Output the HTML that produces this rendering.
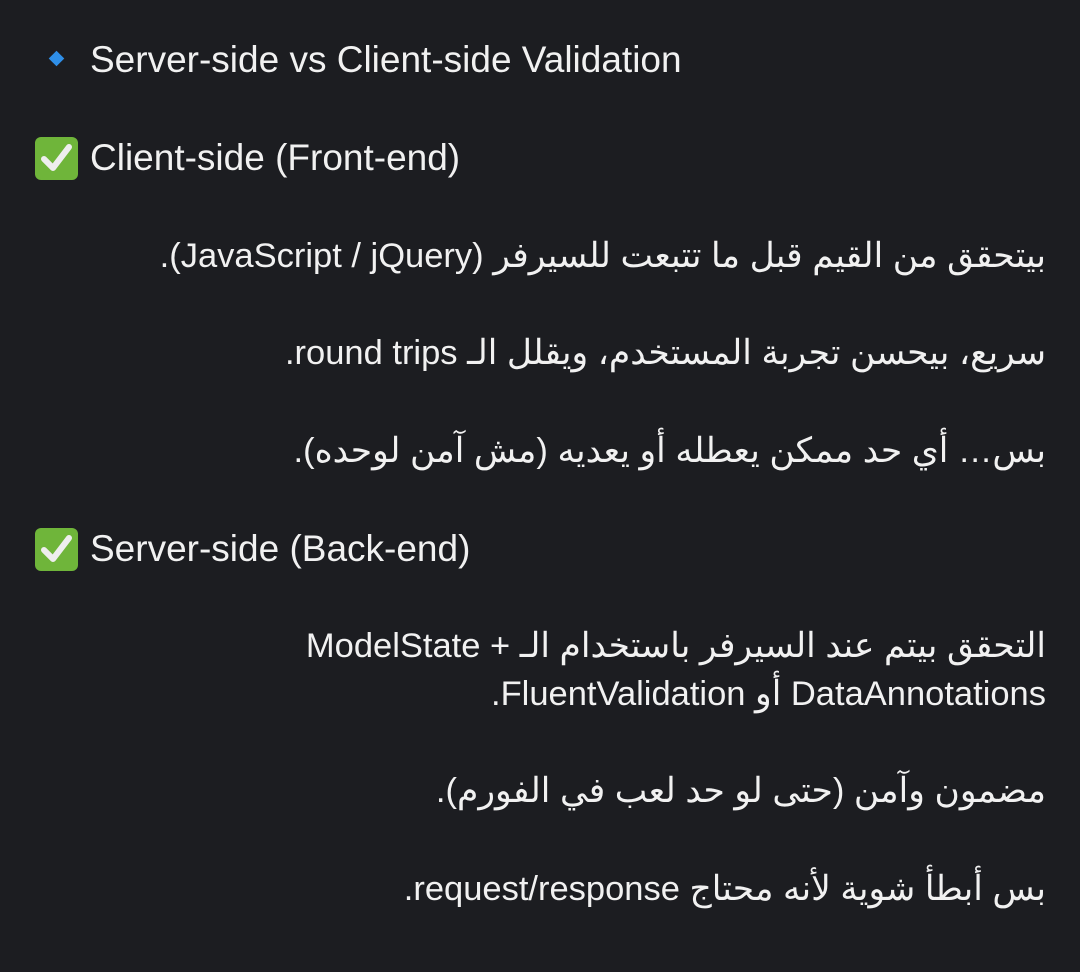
<!DOCTYPE html>
<html><head><meta charset="utf-8"><style>
html,body{margin:0;padding:0;background:#1c1d21;width:1080px;height:972px;overflow:hidden}
.l{position:absolute;color:#f1f1f1;font-family:"Liberation Sans","Noto Sans CJK SC",sans-serif;font-size:37px;line-height:40px;white-space:nowrap}
.r{right:34px;direction:rtl;text-align:right;font-size:34.5px}
.chk{position:absolute;left:35px;width:43px;height:43px;background:#6fb53a;border-radius:6px}
.chk svg{position:absolute;left:5px;top:6px}
</style></head><body>
<div style="position:absolute;left:51px;top:53px;width:11px;height:11px;background:#2f8fe8;transform:rotate(45deg)"></div>
<div class="l" style="left:90px;top:40px">Server-side vs Client-side Validation</div>
<div class="chk" style="top:137px"><svg width="33" height="31" viewBox="0 0 33 31"><path d="M4 16 L13 25 L29 4" stroke="#eee" stroke-width="6" fill="none" stroke-linecap="round" stroke-linejoin="round"/></svg></div>
<div class="l" style="left:90px;top:138px">Client-side (Front-end)</div>
<div class="l r" style="top:236px">بيتحقق من القيم قبل ما تتبعت للسيرفر (JavaScript / jQuery).</div>
<div class="l r" style="top:333px">سريع، بيحسن تجربة المستخدم، ويقلل الـ round trips.</div>
<div class="l r" style="top:431px">بس… أي حد ممكن يعطله أو يعديه (مش آمن لوحده).</div>
<div class="chk" style="top:528px"><svg width="33" height="31" viewBox="0 0 33 31"><path d="M4 16 L13 25 L29 4" stroke="#eee" stroke-width="6" fill="none" stroke-linecap="round" stroke-linejoin="round"/></svg></div>
<div class="l" style="left:90px;top:529px">Server-side (Back-end)</div>
<div class="l r" style="top:626px">التحقق بيتم عند السيرفر باستخدام الـ + ModelState</div>
<div class="l r" style="top:674px">DataAnnotations أو FluentValidation.</div>
<div class="l r" style="top:771px">مضمون وآمن (حتى لو حد لعب في الفورم).</div>
<div class="l r" style="top:869px">بس أبطأ شوية لأنه محتاج request/response.</div>
</body></html>
